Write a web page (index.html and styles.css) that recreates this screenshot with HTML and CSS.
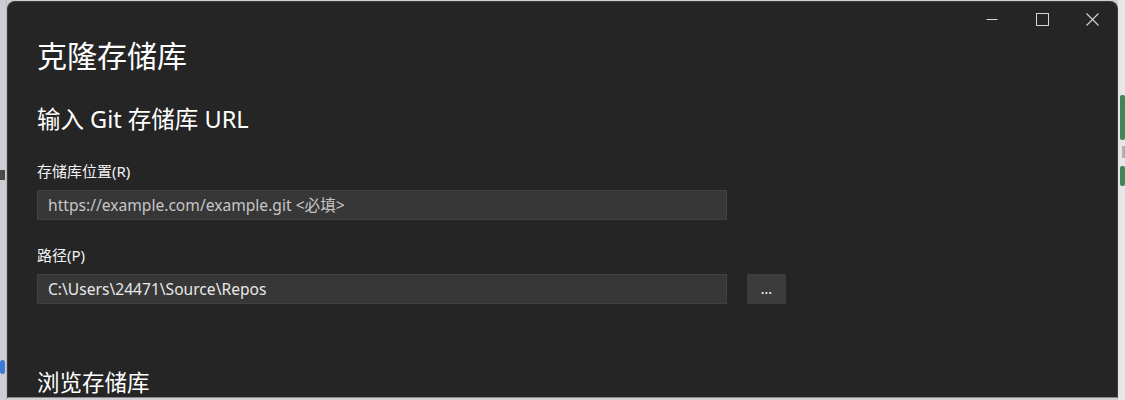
FILE: index.html
```html
<!DOCTYPE html>
<html lang="zh-CN">
<head>
<meta charset="utf-8">
<title>克隆存储库</title>
<link rel="stylesheet" href="styles.css">
</head>
<body>
<div class="desktop">
  <div class="strip strip-left">
    <span class="mark mark-a"></span>
    <span class="mark mark-b"></span>
  </div>
  <div class="window">
    <div class="titlebar">
      <button class="ctl" aria-label="最小化">
        <svg width="12" height="12" viewBox="0 0 12 12"><path d="M0.5 6.5h11" stroke="#d6d6d6" stroke-width="1" fill="none"/></svg>
      </button>
      <button class="ctl" aria-label="最大化">
        <svg width="13" height="13" viewBox="0 0 13 13"><rect x="0.5" y="0.5" width="12" height="12" stroke="#d6d6d6" stroke-width="1" fill="none"/></svg>
      </button>
      <button class="ctl" aria-label="关闭">
        <svg width="13" height="13" viewBox="0 0 13 13"><path d="M0.5 0.5L12.5 12.5M12.5 0.5L0.5 12.5" stroke="#d6d6d6" stroke-width="1.1" fill="none"/></svg>
      </button>
    </div>
    <div class="content">
      <h1 class="title">克隆存储库</h1>
      <h2 class="subtitle">输入 Git 存储库 URL</h2>
      <label class="label label-first">存储库位置(R)</label>
      <div class="row">
        <div class="input placeholder">https://example.com/example.git &lt;必填&gt;</div>
      </div>
      <label class="label label-second">路径(P)</label>
      <div class="row">
        <div class="input value">C:\Users\24471\Source\Repos</div>
        <button class="browse">...</button>
      </div>
      <h2 class="subtitle subtitle-browse">浏览存储库</h2>
    </div>
  </div>
  <div class="strip strip-right">
    <span class="leaf leaf-a"></span>
    <span class="twig"></span>
    <span class="leaf leaf-b"></span>
  </div>
</div>
</body>
</html>
```

FILE: styles.css
```css
* { box-sizing: border-box; }

html, body {
  margin: 0;
  padding: 0;
  height: 400px;
  overflow: hidden;
}

body {
  background: #d2ced6;
  font-family: "Noto Sans", "Noto Sans CJK SC", sans-serif;
}

.desktop {
  display: flex;
  height: 400px;
}

.strip {
  width: 7px;
  flex: none;
  display: flex;
  flex-direction: column;
}

.strip-left {
  background: #d0ccd4;
  border-right: 1px solid #bdb9c2;
}

.mark {
  display: block;
  width: 5px;
}

.mark-a {
  margin-top: 170px;
  height: 10px;
  background: #4a4a4a;
}

.mark-b {
  margin-top: 180px;
  height: 14px;
  background: #3a7bd5;
  border-radius: 3px;
}

.strip-right {
  background: #e6e6e8;
  align-items: flex-end;
}

.leaf {
  display: block;
  width: 5px;
  background: #3f8558;
  border-radius: 2px;
}

.leaf-a {
  margin-top: 95px;
  height: 45px;
}

.twig {
  display: block;
  width: 3px;
  height: 12px;
  margin-top: 6px;
  background: #b4adb4;
}

.leaf-b {
  margin-top: 8px;
  height: 20px;
}

.window {
  flex: 1;
  margin-top: 1px;
  height: 397px;
  background: #252525;
  border-radius: 8px 8px 0 0;
  border: 1px solid #3a3a3a;
  border-bottom: 1px solid #8a8a8a;
  display: flex;
  flex-direction: column;
}

.titlebar {
  height: 34px;
  display: flex;
  justify-content: flex-end;
  flex: none;
}

.ctl {
  width: 50px;
  height: 34px;
  background: transparent;
  border: 0;
  padding: 0;
  display: flex;
  align-items: center;
  justify-content: center;
  cursor: default;
}

.content {
  padding-left: 29px;
  display: flex;
  flex-direction: column;
  align-items: flex-start;
}

.title {
  margin: 0;
  font-size: 30px;
  line-height: 40px;
  font-weight: 400;
  color: #ffffff;
}

.subtitle {
  margin: 28px 0 0;
  font-size: 23.5px;
  line-height: 30px;
  font-weight: 400;
  color: #ffffff;
}

.subtitle-browse {
  margin-top: 64px;
  font-size: 22.5px;
}

.label {
  display: block;
  font-size: 15px;
  line-height: 20px;
  color: #f2f2f2;
}

.label-first {
  margin-top: 27px;
}

.label-second {
  margin-top: 25px;
}

.row {
  display: flex;
  gap: 20px;
  margin-top: 9px;
}

.input {
  width: 690px;
  height: 30px;
  background: #373737;
  border: 1px solid #414141;
  padding: 0 10px;
  font-size: 15.6px;
  line-height: 28px;
  white-space: nowrap;
}

.placeholder {
  color: #c6c6c6;
}

.value {
  color: #e8e8e8;
}

.browse {
  width: 39px;
  height: 30px;
  background: #3c3c3c;
  border: 0;
  color: #ffffff;
  font-family: "Noto Sans", sans-serif;
  font-size: 14px;
  line-height: 28px;
  padding: 0;
}
```
